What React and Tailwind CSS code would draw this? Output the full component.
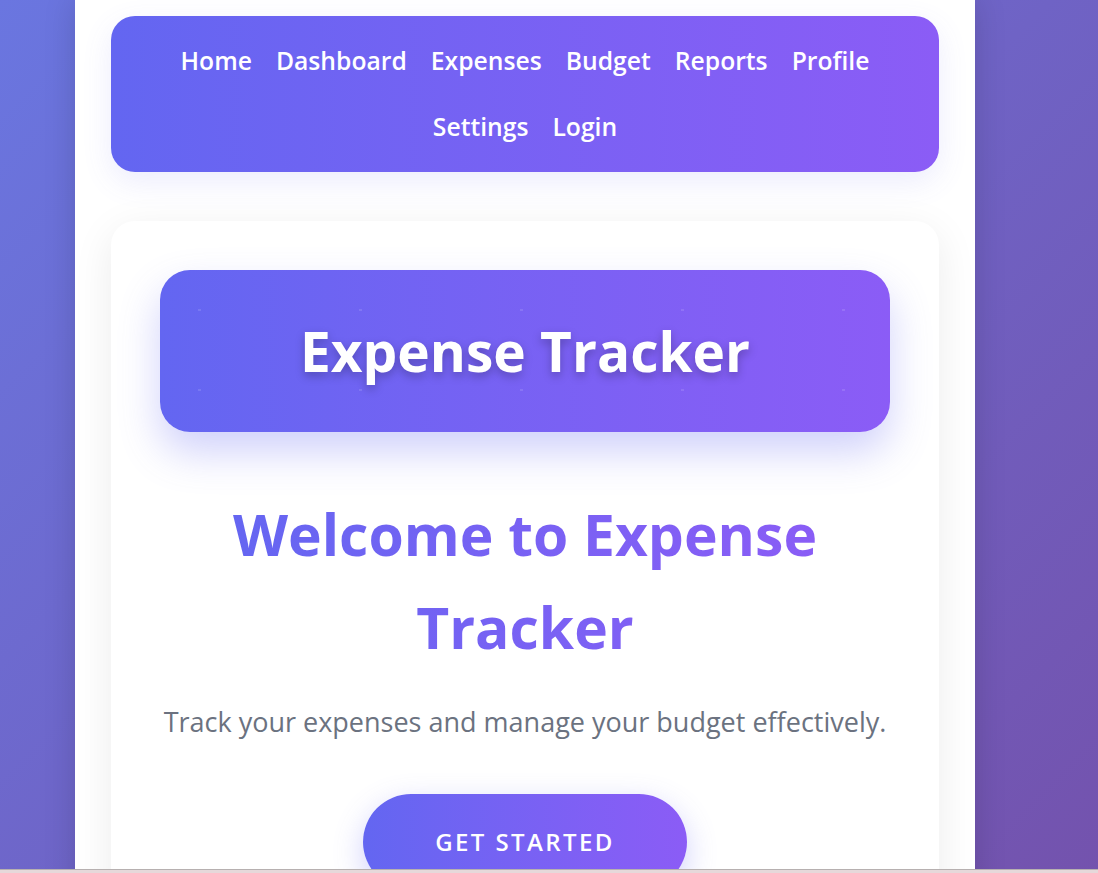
import React from 'react';

const links = ['Home', 'Dashboard', 'Expenses', 'Budget', 'Reports', 'Profile', 'Settings', 'Login'];

export default function App() {
  return (
    <div className="min-h-screen bg-linear-[135deg] from-[#6a76e0] to-[#7450aa] font-['Open_Sans',sans-serif]">
      <div className="ml-[75px] w-[900px] min-h-screen bg-white px-9 pt-4 pb-16 shadow-[0_0_30px_rgba(0,0,0,0.15)]">
        {/* nav */}
        <nav className="rounded-[24px] bg-linear-to-r from-[#6366f1] to-[#8b5cf6] px-4 py-3 shadow-[0_10px_30px_rgba(99,102,241,0.12)]">
          <ul className="flex flex-wrap justify-center">
            {links.map((l) => (
              <li key={l} className="px-3 py-[15px] text-[24.7px] leading-[36px] font-semibold text-white">
                {l}
              </li>
            ))}
          </ul>
        </nav>

        {/* main card */}
        <main className="mt-[49px] rounded-[24px] bg-white p-[49px] shadow-[0_10px_40px_rgba(0,0,0,0.08)]">
          <header className="relative overflow-hidden rounded-[30px] bg-linear-to-r from-[#6366f1] to-[#8b5cf6] py-[42px] text-center shadow-[0_20px_40px_rgba(99,102,241,0.3)]">
            <div className="absolute inset-0 bg-[radial-gradient(circle,rgba(255,255,255,0.12)_1.5px,transparent_1.5px)] bg-size-[161px_80px] bg-position-[-41px_0px]" />
            <h1 className="relative text-[55px] leading-[78px] font-bold text-white [text-shadow:0_4px_10px_rgba(0,0,0,0.25)]">
              Expense Tracker
            </h1>
          </header>

          <h2 className="mx-auto mt-[56px] max-w-[640px] bg-linear-to-r from-[#6366f1] to-[#8b5cf6] bg-clip-text text-center text-[57px] leading-[93px] font-bold text-transparent">
            Welcome to Expense Tracker
          </h2>

          <p className="mt-[28px] text-center text-[27px] leading-[40px] text-[#6b7280]">
            Track your expenses and manage your budget effectively.
          </p>

          <div className="mt-[52px] flex justify-center">
            <button className="rounded-full bg-linear-to-r from-[#6366f1] to-[#8b5cf6] px-[72px] py-[30px] text-[24px] leading-[36px] font-semibold tracking-[2.4px] text-white uppercase shadow-[0_10px_30px_rgba(99,102,241,0.3)]">
              Get Started
            </button>
          </div>
        </main>
      </div>
      <div className="fixed bottom-0 left-0 right-0 h-[4px] border-t border-[#b7b0b0] bg-[#e6d8da]" />
    </div>
  );
}
